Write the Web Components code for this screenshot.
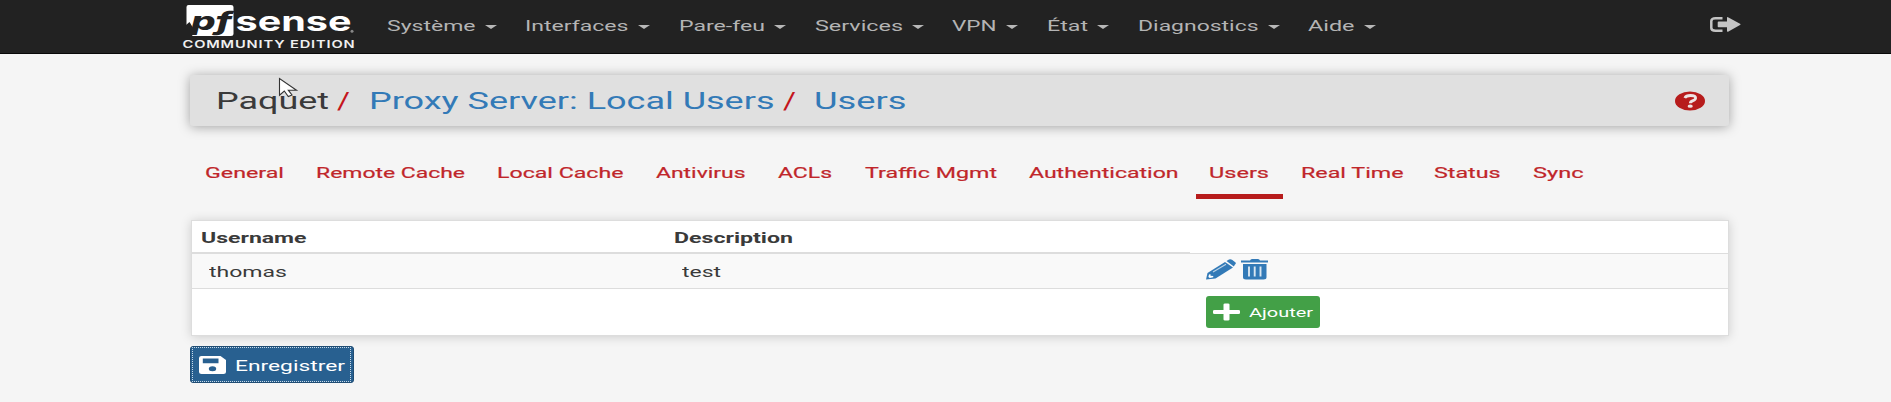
<!DOCTYPE html>
<html lang="fr">
<head>
<meta charset="utf-8">
<title>pfSense - Users</title>
<style>
html,body{margin:0;height:402px;overflow:hidden}
body{background:#f5f5f5;font-family:Roboto,"Liberation Sans",sans-serif;font-size:15px;color:#3a3a3a}
</style>
</head>
<body>
<pf-app></pf-app>
<script>
function define(name, html, init) {
  const t = document.createElement('template');
  t.innerHTML = html;
  customElements.define(name, class extends HTMLElement {
    constructor() {
      super();
      this.attachShadow({mode: 'open'}).appendChild(t.content.cloneNode(true));
    }
    connectedCallback() { if (init) init(this, this.shadowRoot); }
  });
}

/* Text widened to the width given in "w" */
define('fit-text', `<style>:host{display:block;flex:none;white-space:nowrap}
span{display:inline-block;transform-origin:0 50%;vertical-align:top}</style><span><slot></slot></span>`, (el, root) => {
  const w = +el.getAttribute('w');
  el.style.width = w + 'px';
  el.style.marginLeft = (el.getAttribute('gap') || 0) + 'px';
  const s = root.querySelector('span');
  s.style.transform = 'none';
  const natural = s.getBoundingClientRect().width;
  if (natural) s.style.transform = 'scaleX(' + w / natural + ')';
});

define('nav-item', `<style>:host{display:flex;align-items:center;flex:none;height:52px;line-height:51px;color:#b4b4b4}
i{margin:1px 0 0 9.5px;border:6px solid transparent;border-top:4px solid #b8b8b8;border-bottom:0}</style>
<fit-text></fit-text><i></i>`, (el, root) => {
  const f = root.querySelector('fit-text');
  f.textContent = el.getAttribute('label');
  f.setAttribute('w', el.getAttribute('w'));
  f.connectedCallback();
  el.style.marginLeft = el.getAttribute('gap') + 'px';
});

define('pf-logo', `<style>:host{display:block;flex:none;width:176px;height:53px}svg{display:block}
text{font-family:Inter,"Open Sans",sans-serif}</style>
<svg width="176" height="53" viewBox="180 0 176 53">
<path d="M188.500 5H231Q233.500 5 233.500 7V34Q233.500 36 231 36H191L193.500 31H186.500V7Q186.500 5 188.500 5z" fill="#fff"/>
<path d="M186 31V25L189.500 22L195 31L192 36H186z" fill="#222"/>
<text x="191" y="30" font-size="25" font-weight="800" font-style="italic" fill="#222" textLength="41" lengthAdjust="spacingAndGlyphs">pf</text>
<text x="235.500" y="31" font-size="27" font-weight="700" fill="#fff" textLength="116" lengthAdjust="spacingAndGlyphs">sense</text>
<circle cx="352" cy="31.300" r="1.500" fill="#888"/>
<text x="182.500" y="48.300" font-size="10.300" font-weight="600" fill="#f0f0f0" letter-spacing=".6" textLength="173" lengthAdjust="spacingAndGlyphs">COMMUNITY EDITION</text>
</svg>`);

define('pf-navbar', `<style>:host{display:flex;box-sizing:border-box;height:54px;background:#222;border-bottom:1px solid #080808;padding-left:180px}
svg{display:block;margin:17px 0 0 332.500px}</style>
<pf-logo></pf-logo>
<nav-item label="Système" w="88.500" gap="31.200"></nav-item>
<nav-item label="Interfaces" w="103.500" gap="27.800"></nav-item>
<nav-item label="Pare-feu" w="86" gap="28.600"></nav-item>
<nav-item label="Services" w="88" gap="28.800"></nav-item>
<nav-item label="VPN" w="44.500" gap="28"></nav-item>
<nav-item label="État" w="41" gap="28.600"></nav-item>
<nav-item label="Diagnostics" w="120.500" gap="28.200"></nav-item>
<nav-item label="Aide" w="46.500" gap="28.600"></nav-item>
<svg width="33" height="16" viewBox="0 0 33 16"><path d="M13.500 1.300H6.500Q2.300 1.300 2.300 4V11Q2.300 13.700 6.500 13.700H13.500" fill="none" stroke="#c4c4c4" stroke-width="2.500"/><path d="M9.500 4.600H18V.800Q18-.500 19.500.500L31 6.700Q32 7.400 31 8.100L19.500 14.500Q18 15.300 18 14V10.200H9.500Q8.700 10.200 8.700 9.400V5.400Q8.700 4.600 9.500 4.600z" fill="#c4c4c4"/></svg>`);

define('pf-header', `<style>:host{display:flex;align-items:center;box-sizing:border-box;width:1539px;height:51px;margin:20.500px 0 0 190px;padding-left:26px;background:#e0e0e0;border-radius:3px;box-shadow:0 1px 12px rgba(0,0,0,.34);font-size:23.500px;line-height:52px;color:#3a3a3a}
.a{color:#337ab7}.s{color:#c4161c}
fit-text{margin-top:1px}
svg{display:block;margin:1px 0 0 768px}</style>
<fit-text w="113">Paquet</fit-text>
<fit-text class="s" w="13" gap="7.500">/</fit-text>
<fit-text class="a" w="405.500" gap="19">Proxy Server: Local Users</fit-text>
<fit-text class="s" w="13" gap="8.500">/</fit-text>
<fit-text class="a" w="92.500" gap="18.500">Users</fit-text>
<svg width="30" height="20" viewBox="0 0 30 20"><ellipse cx="15" cy="10" rx="15" ry="9.500" fill="#b71c1c"/><path d="M9.800 7Q11 4.500 15.500 4.500Q20.600 4.500 20.600 7Q20.600 8.700 18 9.600Q15.300 10.500 15.300 12.300" fill="none" stroke="#eee4e4" stroke-width="2.800"/><ellipse cx="15.200" cy="15.200" rx="2.600" ry="1.600" fill="#eee4e4"/></svg>`);

define('pf-tabs', `<style>:host{display:flex;box-sizing:border-box;height:94.500px;padding:21.500px 0 0 188.500px;line-height:53px;color:#c0262a;-webkit-text-stroke:.2px #c0262a}
.on{display:flex;justify-content:center;box-sizing:border-box;flex:none;width:87.500px;height:51.500px;border-bottom:5px solid #b71c1c;margin:0 1.500px 0 17.500px}
</style>
<fit-text w="79" gap="16">General</fit-text>
<fit-text w="149" gap="32">Remote Cache</fit-text>
<fit-text w="126.500" gap="32.500">Local Cache</fit-text>
<fit-text w="89.500" gap="32">Antivirus</fit-text>
<fit-text w="54" gap="32.500">ACLs</fit-text>
<fit-text w="132" gap="33">Traffic Mgmt</fit-text>
<fit-text w="149.500" gap="32.200">Authentication</fit-text>
<div class="on"><fit-text w="60">Users</fit-text></div>
<fit-text w="102.500" gap="16">Real Time</fit-text>
<fit-text w="66.500" gap="31.300">Status</fit-text>
<fit-text w="50.500" gap="32">Sync</fit-text>`);

define('pf-button', `<style>:host{display:flex;align-items:center;box-sizing:border-box;flex:none;color:#fff;border-radius:3px}
:host([kind=add]){width:114px;height:32px;background:#43a047;padding-left:7px;font-size:13px;line-height:32px}
:host([kind=save]){width:163.500px;height:37px;background:#286090;border:1px solid #204d74;padding-left:8px;line-height:36px;position:relative}
:host([kind=save])::after{content:"";position:absolute;inset:0 2px 0 1px;border:1px dotted #c8dae8}
::slotted(fit-text){padding-top:2px}</style>
<slot></slot>`);

define('user-table', `<style>:host{display:block;box-sizing:border-box;width:1538.500px;height:116px;margin-left:190.500px;background:#fff;border:1px solid #ddd;box-shadow:0 1px 10px rgba(0,0,0,.17)}
.r{display:grid;grid-template-columns:473px 525.500px 1fr;box-sizing:border-box}
.h{height:33px;line-height:34px;font-weight:700}
.h>*{border-bottom:1px solid #ddd;box-sizing:border-box;height:33px;padding-left:9px}
.h>:nth-child(-n+2){border-bottom:2px solid #ddd}
.b{height:35px;line-height:36px;background:#f9f9f9;border-bottom:1px solid #ddd}
.b>*{padding-left:17px}
.i{display:flex;gap:5px;padding:5px 0 0 15.500px}
.f{height:46px}.f>:last-child{padding:7px 0 0 16px}
svg{display:block}</style>
<div class="r h"><div><fit-text w="105.500">Username</fit-text></div><div><fit-text w="119">Description</fit-text></div><div></div></div>
<div class="r b"><div><fit-text w="78">thomas</fit-text></div><div><fit-text w="39">test</fit-text></div>
<div class="i"><svg width="30" height="21" viewBox="0 0 30 21"><g fill="#337ab7"><path d="M0 20.500L1.500 14L19 3L27 8.500L9.500 19.500z"/><path d="M20.500 2L23 .500Q24.500-.200 26 .800L29.300 3.200Q30.500 4.300 29 5.500L27.800 7.500z"/></g><path d="M7 13L20 5.300" stroke="#bcd4e8" stroke-width="1.100"/><path d="M3 15.500L4.500 15.300V16.800L7.300 17L7.200 18.200L3.800 19L2.400 18z" fill="#fff"/></svg>
<svg width="28" height="21" viewBox="0 0 28 21"><path d="M9 1.500Q9.500 0 11 0H17Q18.500 0 19 1.500H27V3.500H0V1.500z M2 5H25.500V18.300Q25.500 20.500 22.500 20.500H5Q2 20.500 2 18.300z" fill="#337ab7"/><path d="M8 7.500V17.500M13.700 7.500V17.500M19.500 7.500V17.500" stroke="#d9e6f1" stroke-width="1.900"/></svg></div></div>
<div class="r f"><div></div><div></div><div><pf-button kind="add"><svg width="27" height="18" viewBox="0 0 27 18"><path d="M1.500 7H10.500V1.500Q10.500 .500 12 .500H15Q16.500 .500 16.500 1.500V7H25.500Q27 7 27 8V10Q27 11 25.500 11H16.500V16.500Q16.500 17.500 15 17.500H12Q10.500 17.500 10.500 16.500V11H1.500Q0 11 0 10V8Q0 7 1.500 7z" fill="#fff"/></svg><fit-text w="64" gap="8.500">Ajouter</fit-text></pf-button></div></div>`);

define('mouse-cursor', `<style>:host{position:absolute;left:278px;top:77px;display:block}svg{display:block}</style>
<svg width="21" height="21" viewBox="0 0 21 21"><path d="M1.500 1.500V18.200L6.300 14L10.300 19.500L14 18L10.300 13.200H18.500z" fill="#fff" stroke="#333" stroke-width="1.100"/></svg>`);

define('pf-app', `<style>:host{display:block;height:402px;position:relative}
.save{margin:10px 0 0 190px}svg{display:block}</style>
<pf-navbar></pf-navbar><pf-header></pf-header><pf-tabs></pf-tabs><user-table></user-table>
<pf-button class="save" kind="save"><svg width="28" height="18" viewBox="0 0 28 18"><path fill-rule="evenodd" d="M2.500 0H21.500L27 4V16Q27 18 24.500 18H2.500Q0 18 0 16V2Q0 0 2.500 0z M3.800 2.500V7.300H19.500V2.500z M13.500 10.200A3.700 2.500 0 1 0 13.500 15.200A3.700 2.500 0 1 0 13.500 10.200z" fill="#fff"/></svg><fit-text w="110" gap="8">Enregistrer</fit-text></pf-button>
<mouse-cursor></mouse-cursor>`);
</script>
</body>
</html>
